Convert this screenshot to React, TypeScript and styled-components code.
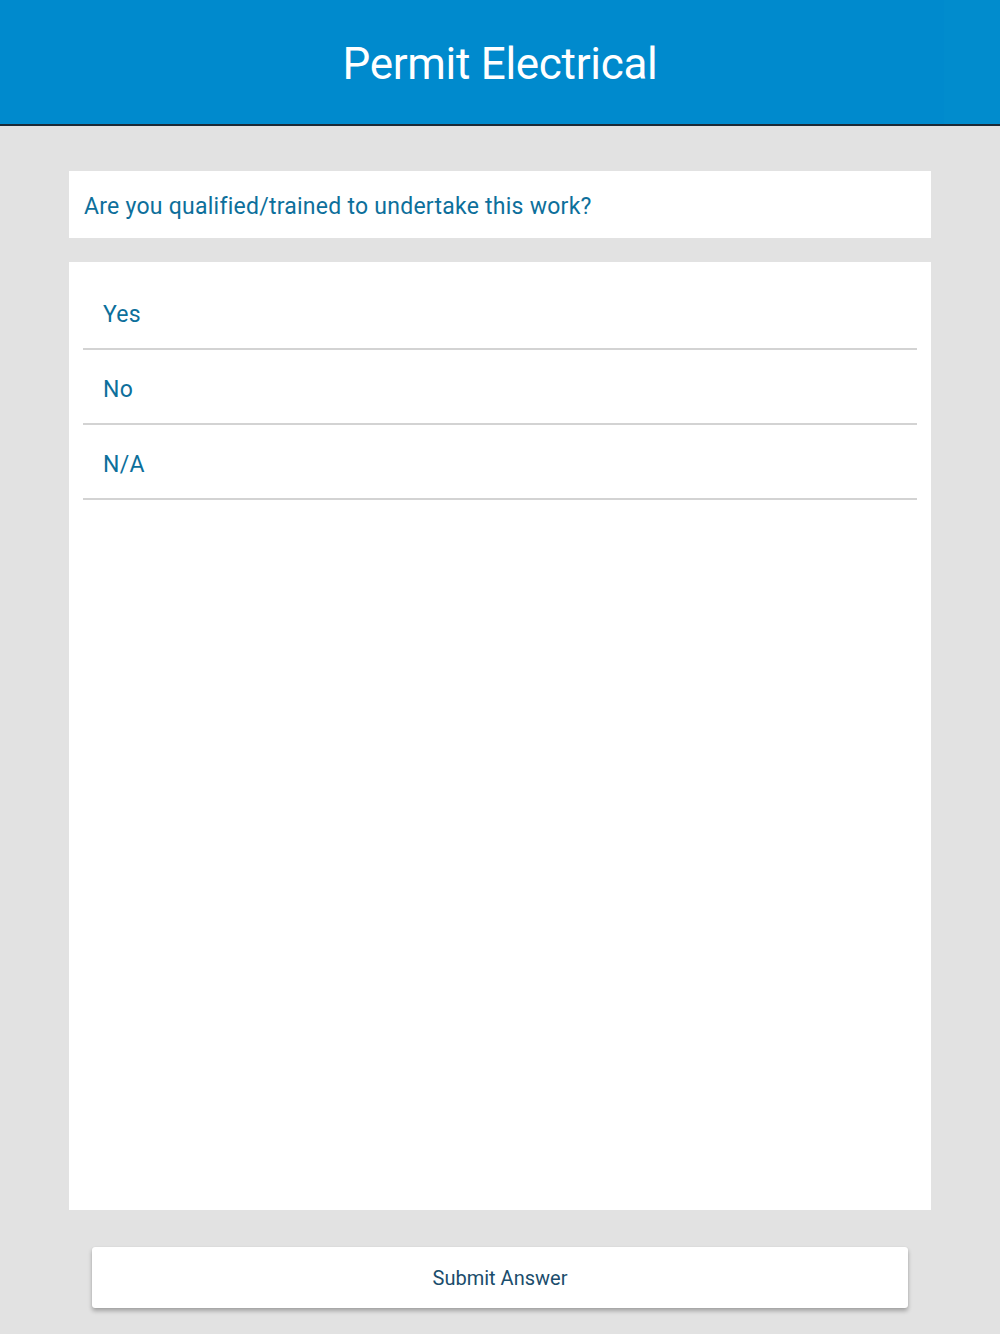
import React from "react";
import styled, { createGlobalStyle } from "styled-components";

const Global = createGlobalStyle`
  *, *::before, *::after { box-sizing: border-box; }
  html, body {
    margin: 0;
    padding: 0;
    background: #e2e2e2;
    font-family: Roboto, "Noto Sans", "Liberation Sans", sans-serif;
  }
  #root { min-height: 1334px; }
`;

const Page = styled.div`
  width: 1000px;
  min-height: 1334px;
  background: #e2e2e2;
  display: flex;
  flex-direction: column;
`;

const Header = styled.header`
  height: 126px;
  background: linear-gradient(to right, #008acd 0, #008acd 944px, #018ccd 944px);
  border-bottom: 2px solid #1c2a36;
  display: flex;
  align-items: center;
  justify-content: center;
`;

const Title = styled.h1`
  margin: 0;
  color: #ffffff;
  font-weight: 400;
  font-size: 44px;
  letter-spacing: -0.3px;
  padding-top: 3px;
`;

const Main = styled.main`
  display: flex;
  flex-direction: column;
  padding: 45px 69px 0 69px;
`;

const QuestionCard = styled.div`
  background: #ffffff;
  height: 67px;
  display: flex;
  align-items: center;
  padding: 0 15px;
`;

const QuestionText = styled.p`
  margin: 0;
  color: #0d6f9b;
  font-size: 23px;
  letter-spacing: 0.25px;
  padding-top: 4px;
`;

const OptionsCard = styled.div`
  background: #ffffff;
  margin-top: 24px;
  height: 948px;
  padding: 13px 14px 0 14px;
  display: flex;
  flex-direction: column;
`;

const OptionRow = styled.div`
  height: 75px;
  flex-shrink: 0;
  border-bottom: 2px solid #d3d3d3;
  display: flex;
  align-items: center;
  padding: 5px 0 0 20px;
  color: #0d6f9b;
  font-size: 23px;
  letter-spacing: 0.25px;
  cursor: pointer;
`;

const ButtonWrap = styled.div`
  display: flex;
  justify-content: center;
  padding: 37px 0 0 0;
`;

const SubmitButton = styled.button`
  width: 816px;
  height: 61px;
  background: #ffffff;
  border: none;
  border-radius: 3px;
  box-shadow: 0 3px 4px rgba(0, 0, 0, 0.28), 0 0 1px rgba(0, 0, 0, 0.12);
  color: #1b4d6c;
  font-family: Roboto, "Noto Sans", "Liberation Sans", sans-serif;
  font-size: 20px;
  letter-spacing: 0px;
  cursor: pointer;
`;

const options = ["Yes", "No", "N/A"];

export default function App() {
  return (
    <Page>
      <Global />
      <Header>
        <Title>Permit Electrical</Title>
      </Header>
      <Main>
        <QuestionCard>
          <QuestionText>Are you qualified/trained to undertake this work?</QuestionText>
        </QuestionCard>
        <OptionsCard>
          {options.map((o) => (
            <OptionRow key={o}>{o}</OptionRow>
          ))}
        </OptionsCard>
      </Main>
      <ButtonWrap>
        <SubmitButton>Submit Answer</SubmitButton>
      </ButtonWrap>
    </Page>
  );
}
